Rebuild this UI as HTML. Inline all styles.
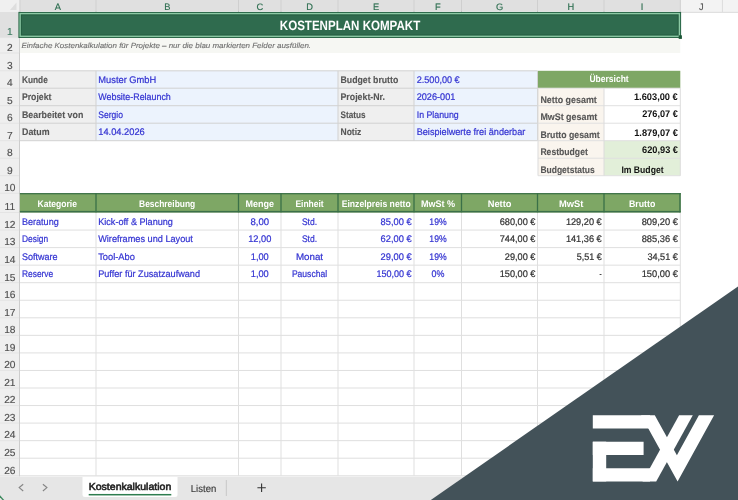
<!DOCTYPE html>
<html><head><meta charset="utf-8"><style>
html,body{margin:0;padding:0;background:#fff;width:738px;height:500px;overflow:hidden}
svg{display:block;font-family:"Liberation Sans",sans-serif;will-change:transform}
</style></head><body>
<svg width="738" height="500" viewBox="0 0 738 500" text-rendering="geometricPrecision">
<rect x="0.00" y="0.00" width="738.00" height="500.00" fill="#ffffff"/>
<rect x="0.00" y="0.00" width="738.00" height="12.00" fill="#f3f3f3"/>
<rect x="19.90" y="0.00" width="660.40" height="12.00" fill="#e0e0e0"/>
<rect x="0.00" y="11.00" width="738.00" height="1.00" fill="#f4f4f4"/>
<rect x="680.30" y="11.80" width="57.70" height="1.00" fill="#d9d9d9"/>
<rect x="19.40" y="0.00" width="1.00" height="12.00" fill="#cfcfcf"/>
<rect x="95.50" y="0.00" width="1.00" height="12.00" fill="#cfcfcf"/>
<rect x="238.00" y="0.00" width="1.00" height="12.00" fill="#cfcfcf"/>
<rect x="280.50" y="0.00" width="1.00" height="12.00" fill="#cfcfcf"/>
<rect x="337.50" y="0.00" width="1.00" height="12.00" fill="#cfcfcf"/>
<rect x="413.50" y="0.00" width="1.00" height="12.00" fill="#cfcfcf"/>
<rect x="461.00" y="0.00" width="1.00" height="12.00" fill="#cfcfcf"/>
<rect x="537.00" y="0.00" width="1.00" height="12.00" fill="#cfcfcf"/>
<rect x="603.50" y="0.00" width="1.00" height="12.00" fill="#cfcfcf"/>
<rect x="679.80" y="0.00" width="1.00" height="12.00" fill="#cfcfcf"/>
<rect x="721.90" y="0.00" width="1.00" height="12.00" fill="#dcdcdc"/>
<rect x="0.00" y="0.00" width="19.00" height="12.00" fill="#f0f0f0"/>
<polygon points="16.5,2.5 16.5,10.0 10.0,10.0" fill="#dedede"/>
<rect x="0.00" y="12.00" width="19.00" height="464.60" fill="#efefef"/>
<rect x="0.00" y="12.00" width="19.00" height="25.60" fill="#e0e0e0"/>
<rect x="19.00" y="12.00" width="0.90" height="464.60" fill="#c8c8c8"/>
<rect x="0.00" y="37.10" width="19.00" height="1.00" fill="#e4e4e4"/>
<rect x="0.00" y="52.50" width="19.00" height="1.00" fill="#e4e4e4"/>
<rect x="0.00" y="70.30" width="19.00" height="1.00" fill="#e4e4e4"/>
<rect x="0.00" y="87.70" width="19.00" height="1.00" fill="#e4e4e4"/>
<rect x="0.00" y="105.20" width="19.00" height="1.00" fill="#e4e4e4"/>
<rect x="0.00" y="122.70" width="19.00" height="1.00" fill="#e4e4e4"/>
<rect x="0.00" y="140.20" width="19.00" height="1.00" fill="#e4e4e4"/>
<rect x="0.00" y="157.70" width="19.00" height="1.00" fill="#e4e4e4"/>
<rect x="0.00" y="175.20" width="19.00" height="1.00" fill="#e4e4e4"/>
<rect x="0.00" y="192.70" width="19.00" height="1.00" fill="#e4e4e4"/>
<rect x="0.00" y="212.00" width="19.00" height="1.00" fill="#e4e4e4"/>
<rect x="0.00" y="229.55" width="19.00" height="1.00" fill="#e4e4e4"/>
<rect x="0.00" y="247.10" width="19.00" height="1.00" fill="#e4e4e4"/>
<rect x="0.00" y="264.65" width="19.00" height="1.00" fill="#e4e4e4"/>
<rect x="0.00" y="282.20" width="19.00" height="1.00" fill="#e4e4e4"/>
<rect x="0.00" y="299.75" width="19.00" height="1.00" fill="#e4e4e4"/>
<rect x="0.00" y="317.30" width="19.00" height="1.00" fill="#e4e4e4"/>
<rect x="0.00" y="334.85" width="19.00" height="1.00" fill="#e4e4e4"/>
<rect x="0.00" y="352.40" width="19.00" height="1.00" fill="#e4e4e4"/>
<rect x="0.00" y="369.95" width="19.00" height="1.00" fill="#e4e4e4"/>
<rect x="0.00" y="387.50" width="19.00" height="1.00" fill="#e4e4e4"/>
<rect x="0.00" y="405.05" width="19.00" height="1.00" fill="#e4e4e4"/>
<rect x="0.00" y="422.60" width="19.00" height="1.00" fill="#e4e4e4"/>
<rect x="0.00" y="440.15" width="19.00" height="1.00" fill="#e4e4e4"/>
<rect x="0.00" y="457.70" width="19.00" height="1.00" fill="#e4e4e4"/>
<rect x="0.00" y="475.25" width="19.00" height="1.00" fill="#e4e4e4"/>
<rect x="19.90" y="37.60" width="660.40" height="15.40" fill="#f6f7f3"/>
<rect x="19.90" y="212.00" width="660.40" height="1.00" fill="#dfdfdf"/>
<rect x="19.90" y="229.55" width="660.40" height="1.00" fill="#dfdfdf"/>
<rect x="19.90" y="247.10" width="660.40" height="1.00" fill="#dfdfdf"/>
<rect x="19.90" y="264.65" width="660.40" height="1.00" fill="#dfdfdf"/>
<rect x="19.90" y="282.20" width="660.40" height="1.00" fill="#dfdfdf"/>
<rect x="19.90" y="299.75" width="660.40" height="1.00" fill="#dfdfdf"/>
<rect x="19.90" y="317.30" width="660.40" height="1.00" fill="#dfdfdf"/>
<rect x="19.90" y="334.85" width="660.40" height="1.00" fill="#dfdfdf"/>
<rect x="19.90" y="352.40" width="660.40" height="1.00" fill="#dfdfdf"/>
<rect x="19.90" y="369.95" width="660.40" height="1.00" fill="#dfdfdf"/>
<rect x="19.90" y="387.50" width="660.40" height="1.00" fill="#dfdfdf"/>
<rect x="19.90" y="405.05" width="660.40" height="1.00" fill="#dfdfdf"/>
<rect x="19.90" y="422.60" width="660.40" height="1.00" fill="#dfdfdf"/>
<rect x="19.90" y="440.15" width="660.40" height="1.00" fill="#dfdfdf"/>
<rect x="19.90" y="457.70" width="660.40" height="1.00" fill="#dfdfdf"/>
<rect x="19.90" y="475.25" width="660.40" height="1.00" fill="#dfdfdf"/>
<rect x="95.50" y="212.50" width="1.00" height="263.25" fill="#dfdfdf"/>
<rect x="238.00" y="212.50" width="1.00" height="263.25" fill="#dfdfdf"/>
<rect x="280.50" y="212.50" width="1.00" height="263.25" fill="#dfdfdf"/>
<rect x="337.50" y="212.50" width="1.00" height="263.25" fill="#dfdfdf"/>
<rect x="413.50" y="212.50" width="1.00" height="263.25" fill="#dfdfdf"/>
<rect x="461.00" y="212.50" width="1.00" height="263.25" fill="#dfdfdf"/>
<rect x="537.00" y="212.50" width="1.00" height="263.25" fill="#dfdfdf"/>
<rect x="603.50" y="212.50" width="1.00" height="263.25" fill="#dfdfdf"/>
<rect x="679.80" y="212.50" width="1.00" height="263.25" fill="#dfdfdf"/>
<rect x="19.90" y="70.80" width="76.10" height="69.90" fill="#efefef"/>
<rect x="96.00" y="70.80" width="242.00" height="69.90" fill="#ecf3fd"/>
<rect x="338.00" y="70.80" width="76.00" height="69.90" fill="#efefef"/>
<rect x="414.00" y="70.80" width="123.50" height="69.90" fill="#ecf3fd"/>
<rect x="19.90" y="70.30" width="517.60" height="1.00" fill="#d2d2d2"/>
<rect x="19.90" y="87.70" width="517.60" height="1.00" fill="#d2d2d2"/>
<rect x="19.90" y="105.20" width="517.60" height="1.00" fill="#d2d2d2"/>
<rect x="19.90" y="122.70" width="517.60" height="1.00" fill="#d2d2d2"/>
<rect x="19.90" y="140.20" width="517.60" height="1.00" fill="#d2d2d2"/>
<rect x="95.50" y="70.80" width="1.00" height="69.90" fill="#d2d2d2"/>
<rect x="337.50" y="70.80" width="1.00" height="69.90" fill="#d2d2d2"/>
<rect x="413.50" y="70.80" width="1.00" height="69.90" fill="#d2d2d2"/>
<rect x="537.00" y="70.80" width="1.00" height="69.90" fill="#d2d2d2"/>
<rect x="538.00" y="70.80" width="142.30" height="17.40" fill="#7ea765"/>
<rect x="538.00" y="88.20" width="66.00" height="87.50" fill="#faf5ee"/>
<rect x="604.00" y="88.20" width="76.30" height="52.50" fill="#ffffff"/>
<rect x="604.00" y="140.70" width="76.30" height="35.00" fill="#e2efd9"/>
<rect x="538.00" y="87.70" width="142.30" height="1.00" fill="#e0e0e0"/>
<rect x="538.00" y="105.20" width="142.30" height="1.00" fill="#e0e0e0"/>
<rect x="538.00" y="122.70" width="142.30" height="1.00" fill="#e0e0e0"/>
<rect x="538.00" y="140.20" width="142.30" height="1.00" fill="#e0e0e0"/>
<rect x="538.00" y="157.70" width="142.30" height="1.00" fill="#e0e0e0"/>
<rect x="538.00" y="175.20" width="142.30" height="1.00" fill="#e0e0e0"/>
<rect x="537.50" y="88.20" width="1.00" height="87.50" fill="#dcdcdc"/>
<rect x="603.50" y="88.20" width="1.00" height="87.50" fill="#dcdcdc"/>
<rect x="679.80" y="88.20" width="1.00" height="87.50" fill="#dcdcdc"/>
<rect x="19.90" y="193.10" width="660.80" height="19.30" fill="#7ea765"/>
<rect x="19.90" y="193.10" width="660.80" height="1.20" fill="#3a7048"/>
<rect x="19.90" y="210.90" width="660.80" height="1.50" fill="#3a7048"/>
<rect x="679.30" y="193.10" width="1.40" height="19.30" fill="#3a7048"/>
<rect x="95.35" y="193.10" width="1.30" height="19.30" fill="#3a7048"/>
<rect x="237.85" y="193.10" width="1.30" height="19.30" fill="#3a7048"/>
<rect x="280.35" y="193.10" width="1.30" height="19.30" fill="#3a7048"/>
<rect x="337.35" y="193.10" width="1.30" height="19.30" fill="#3a7048"/>
<rect x="413.35" y="193.10" width="1.30" height="19.30" fill="#3a7048"/>
<rect x="460.85" y="193.10" width="1.30" height="19.30" fill="#3a7048"/>
<rect x="536.85" y="193.10" width="1.30" height="19.30" fill="#3a7048"/>
<rect x="603.35" y="193.10" width="1.30" height="19.30" fill="#3a7048"/>
<rect x="18.40" y="11.90" width="662.70" height="26.10" fill="#2b6748"/>
<rect x="19.45" y="12.95" width="660.60" height="24.00" fill="#8ccaa5"/>
<rect x="20.80" y="14.30" width="657.90" height="21.30" fill="#245e41"/>
<rect x="21.90" y="15.40" width="655.70" height="19.10" fill="#2f6b4e"/>
<rect x="678.70" y="35.30" width="3.20" height="3.60" fill="#1b5535"/>
<rect x="0.00" y="476.60" width="738.00" height="23.40" fill="#e6e6e6"/>
<path d="M23.2,484.3 L19.2,487.6 L23.2,491" fill="none" stroke="#858585" stroke-width="1.15"/>
<path d="M42.9,484.3 L46.9,487.6 L42.9,491" fill="none" stroke="#858585" stroke-width="1.15"/>
<path d="M82.5,477 H177.5 V494.5 Q177.5,497 175,497 H85 Q82.5,497 82.5,494.5 Z" fill="#ffffff"/>
<rect x="88.70" y="493.95" width="82.60" height="1.50" fill="#2e7d4f"/>
<rect x="225.80" y="480.00" width="1.00" height="16.00" fill="#c8c8c8"/>
<path d="M261.6,483.6 V492 M257.4,487.8 H265.8" stroke="#333" stroke-width="1.1"/>
<polygon points="0,495.3 0,497.3 2.4,500 4.2,500" fill="#3d8a5e"/>
<text x="57.95" y="9.75" font-size="9.3" fill="#2d6e50" stroke="#2d6e50" stroke-width="0.15" text-anchor="middle">A</text>
<text x="167.25" y="9.75" font-size="9.3" fill="#2d6e50" stroke="#2d6e50" stroke-width="0.15" text-anchor="middle">B</text>
<text x="259.75" y="9.75" font-size="9.3" fill="#2d6e50" stroke="#2d6e50" stroke-width="0.15" text-anchor="middle">C</text>
<text x="309.50" y="9.75" font-size="9.3" fill="#2d6e50" stroke="#2d6e50" stroke-width="0.15" text-anchor="middle">D</text>
<text x="376.00" y="9.75" font-size="9.3" fill="#2d6e50" stroke="#2d6e50" stroke-width="0.15" text-anchor="middle">E</text>
<text x="437.75" y="9.75" font-size="9.3" fill="#2d6e50" stroke="#2d6e50" stroke-width="0.15" text-anchor="middle">F</text>
<text x="499.50" y="9.75" font-size="9.3" fill="#2d6e50" stroke="#2d6e50" stroke-width="0.15" text-anchor="middle">G</text>
<text x="570.75" y="9.75" font-size="9.3" fill="#2d6e50" stroke="#2d6e50" stroke-width="0.15" text-anchor="middle">H</text>
<text x="642.15" y="9.75" font-size="9.3" fill="#2d6e50" stroke="#2d6e50" stroke-width="0.15" text-anchor="middle">I</text>
<text x="701.35" y="9.75" font-size="9.3" fill="#555555" stroke="#555555" stroke-width="0.15" text-anchor="middle">J</text>
<text x="9.80" y="35.40" font-size="10.2" fill="#3d7a60" stroke="#3d7a60" stroke-width="0.15" text-anchor="middle">1</text>
<text x="9.80" y="50.80" font-size="10.2" fill="#505050" stroke="#505050" stroke-width="0.15" text-anchor="middle">2</text>
<text x="9.80" y="68.60" font-size="10.2" fill="#505050" stroke="#505050" stroke-width="0.15" text-anchor="middle">3</text>
<text x="9.80" y="86.00" font-size="10.2" fill="#505050" stroke="#505050" stroke-width="0.15" text-anchor="middle">4</text>
<text x="9.80" y="103.50" font-size="10.2" fill="#505050" stroke="#505050" stroke-width="0.15" text-anchor="middle">5</text>
<text x="9.80" y="121.00" font-size="10.2" fill="#505050" stroke="#505050" stroke-width="0.15" text-anchor="middle">6</text>
<text x="9.80" y="138.50" font-size="10.2" fill="#505050" stroke="#505050" stroke-width="0.15" text-anchor="middle">7</text>
<text x="9.80" y="156.00" font-size="10.2" fill="#505050" stroke="#505050" stroke-width="0.15" text-anchor="middle">8</text>
<text x="9.80" y="173.50" font-size="10.2" fill="#505050" stroke="#505050" stroke-width="0.15" text-anchor="middle">9</text>
<text x="9.80" y="191.00" font-size="10.2" fill="#505050" stroke="#505050" stroke-width="0.15" text-anchor="middle">10</text>
<text x="9.80" y="210.30" font-size="10.2" fill="#505050" stroke="#505050" stroke-width="0.15" text-anchor="middle">11</text>
<text x="9.80" y="227.85" font-size="10.2" fill="#505050" stroke="#505050" stroke-width="0.15" text-anchor="middle">12</text>
<text x="9.80" y="245.40" font-size="10.2" fill="#505050" stroke="#505050" stroke-width="0.15" text-anchor="middle">13</text>
<text x="9.80" y="262.95" font-size="10.2" fill="#505050" stroke="#505050" stroke-width="0.15" text-anchor="middle">14</text>
<text x="9.80" y="280.50" font-size="10.2" fill="#505050" stroke="#505050" stroke-width="0.15" text-anchor="middle">15</text>
<text x="9.80" y="298.05" font-size="10.2" fill="#505050" stroke="#505050" stroke-width="0.15" text-anchor="middle">16</text>
<text x="9.80" y="315.60" font-size="10.2" fill="#505050" stroke="#505050" stroke-width="0.15" text-anchor="middle">17</text>
<text x="9.80" y="333.15" font-size="10.2" fill="#505050" stroke="#505050" stroke-width="0.15" text-anchor="middle">18</text>
<text x="9.80" y="350.70" font-size="10.2" fill="#505050" stroke="#505050" stroke-width="0.15" text-anchor="middle">19</text>
<text x="9.80" y="368.25" font-size="10.2" fill="#505050" stroke="#505050" stroke-width="0.15" text-anchor="middle">20</text>
<text x="9.80" y="385.80" font-size="10.2" fill="#505050" stroke="#505050" stroke-width="0.15" text-anchor="middle">21</text>
<text x="9.80" y="403.35" font-size="10.2" fill="#505050" stroke="#505050" stroke-width="0.15" text-anchor="middle">22</text>
<text x="9.80" y="420.90" font-size="10.2" fill="#505050" stroke="#505050" stroke-width="0.15" text-anchor="middle">23</text>
<text x="9.80" y="438.45" font-size="10.2" fill="#505050" stroke="#505050" stroke-width="0.15" text-anchor="middle">24</text>
<text x="9.80" y="456.00" font-size="10.2" fill="#505050" stroke="#505050" stroke-width="0.15" text-anchor="middle">25</text>
<text x="9.80" y="473.55" font-size="10.2" fill="#505050" stroke="#505050" stroke-width="0.15" text-anchor="middle">26</text>
<text x="279.80" y="30.00" font-size="13.5" fill="#ffffff" font-weight="bold" textLength="140.40" lengthAdjust="spacingAndGlyphs">KOSTENPLAN KOMPAKT</text>
<text x="21.40" y="48.00" font-size="7.4" fill="#707070" stroke="#707070" stroke-width="0.12" font-style="italic" textLength="289.70" lengthAdjust="spacingAndGlyphs">Einfache Kostenkalkulation für Projekte – nur die blau markierten Felder ausfüllen.</text>
<text x="21.90" y="82.70" font-size="9.6" fill="#565656" font-weight="bold" stroke="#565656" stroke-width="0.12" textLength="25.90" lengthAdjust="spacingAndGlyphs">Kunde</text>
<text x="21.90" y="100.20" font-size="9.6" fill="#565656" font-weight="bold" stroke="#565656" stroke-width="0.12" textLength="29.50" lengthAdjust="spacingAndGlyphs">Projekt</text>
<text x="22.00" y="117.70" font-size="9.6" fill="#565656" font-weight="bold" stroke="#565656" stroke-width="0.12" textLength="61.30" lengthAdjust="spacingAndGlyphs">Bearbeitet von</text>
<text x="22.00" y="135.20" font-size="9.6" fill="#565656" font-weight="bold" stroke="#565656" stroke-width="0.12" textLength="27.50" lengthAdjust="spacingAndGlyphs">Datum</text>
<text x="98.30" y="82.70" font-size="9.6" fill="#3434d2" stroke="#3434d2" stroke-width="0.22" textLength="58.00" lengthAdjust="spacingAndGlyphs">Muster GmbH</text>
<text x="98.30" y="100.20" font-size="9.6" fill="#3434d2" stroke="#3434d2" stroke-width="0.22" textLength="72.50" lengthAdjust="spacingAndGlyphs">Website-Relaunch</text>
<text x="98.30" y="117.70" font-size="9.6" fill="#3434d2" stroke="#3434d2" stroke-width="0.22" textLength="24.70" lengthAdjust="spacingAndGlyphs">Sergio</text>
<text x="98.30" y="135.20" font-size="9.6" fill="#3434d2" stroke="#3434d2" stroke-width="0.22" textLength="46.40" lengthAdjust="spacingAndGlyphs">14.04.2026</text>
<text x="340.50" y="82.70" font-size="9.6" fill="#565656" font-weight="bold" stroke="#565656" stroke-width="0.12" textLength="57.80" lengthAdjust="spacingAndGlyphs">Budget brutto</text>
<text x="340.50" y="100.20" font-size="9.6" fill="#565656" font-weight="bold" stroke="#565656" stroke-width="0.12" textLength="44.50" lengthAdjust="spacingAndGlyphs">Projekt-Nr.</text>
<text x="340.50" y="117.70" font-size="9.6" fill="#565656" font-weight="bold" stroke="#565656" stroke-width="0.12" textLength="25.00" lengthAdjust="spacingAndGlyphs">Status</text>
<text x="340.50" y="135.20" font-size="9.6" fill="#565656" font-weight="bold" stroke="#565656" stroke-width="0.12" textLength="20.80" lengthAdjust="spacingAndGlyphs">Notiz</text>
<text x="416.70" y="82.70" font-size="9.6" fill="#3434d2" stroke="#3434d2" stroke-width="0.22" textLength="43.00" lengthAdjust="spacingAndGlyphs">2.500,00 €</text>
<text x="416.70" y="100.20" font-size="9.6" fill="#3434d2" stroke="#3434d2" stroke-width="0.22" textLength="38.60" lengthAdjust="spacingAndGlyphs">2026-001</text>
<text x="416.70" y="117.70" font-size="9.6" fill="#3434d2" stroke="#3434d2" stroke-width="0.22" textLength="42.00" lengthAdjust="spacingAndGlyphs">In Planung</text>
<text x="416.70" y="135.20" font-size="9.6" fill="#3434d2" stroke="#3434d2" stroke-width="0.22" textLength="108.60" lengthAdjust="spacingAndGlyphs">Beispielwerte frei änderbar</text>
<text x="589.40" y="82.40" font-size="9.6" fill="#ffffff" font-weight="bold" textLength="39.30" lengthAdjust="spacingAndGlyphs">Übersicht</text>
<text x="540.40" y="102.70" font-size="9.6" fill="#565656" font-weight="bold" stroke="#565656" stroke-width="0.12" textLength="56.40" lengthAdjust="spacingAndGlyphs">Netto gesamt</text>
<text x="540.40" y="120.20" font-size="9.6" fill="#565656" font-weight="bold" stroke="#565656" stroke-width="0.12" textLength="56.90" lengthAdjust="spacingAndGlyphs">MwSt gesamt</text>
<text x="540.40" y="138.00" font-size="9.6" fill="#565656" font-weight="bold" stroke="#565656" stroke-width="0.12" textLength="59.20" lengthAdjust="spacingAndGlyphs">Brutto gesamt</text>
<text x="540.40" y="155.40" font-size="9.6" fill="#565656" font-weight="bold" stroke="#565656" stroke-width="0.12" textLength="47.40" lengthAdjust="spacingAndGlyphs">Restbudget</text>
<text x="540.40" y="172.80" font-size="9.6" fill="#565656" font-weight="bold" stroke="#565656" stroke-width="0.12" textLength="54.30" lengthAdjust="spacingAndGlyphs">Budgetstatus</text>
<text x="633.90" y="99.70" font-size="9.6" fill="#111111" font-weight="bold" textLength="43.90" lengthAdjust="spacingAndGlyphs">1.603,00 €</text>
<text x="642.20" y="117.40" font-size="9.6" fill="#111111" font-weight="bold" textLength="35.60" lengthAdjust="spacingAndGlyphs">276,07 €</text>
<text x="634.20" y="135.60" font-size="9.6" fill="#111111" font-weight="bold" textLength="43.80" lengthAdjust="spacingAndGlyphs">1.879,07 €</text>
<text x="642.00" y="152.70" font-size="9.6" fill="#111111" font-weight="bold" textLength="36.00" lengthAdjust="spacingAndGlyphs">620,93 €</text>
<text x="621.40" y="172.80" font-size="9.6" fill="#111111" font-weight="bold" textLength="42.20" lengthAdjust="spacingAndGlyphs">Im Budget</text>
<text x="37.50" y="206.70" font-size="9.6" fill="#ffffff" font-weight="bold" textLength="39.50" lengthAdjust="spacingAndGlyphs">Kategorie</text>
<text x="139.10" y="206.70" font-size="9.6" fill="#ffffff" font-weight="bold" textLength="56.10" lengthAdjust="spacingAndGlyphs">Beschreibung</text>
<text x="245.40" y="206.70" font-size="9.6" fill="#ffffff" font-weight="bold" textLength="28.50" lengthAdjust="spacingAndGlyphs">Menge</text>
<text x="295.40" y="206.70" font-size="9.6" fill="#ffffff" font-weight="bold" textLength="28.30" lengthAdjust="spacingAndGlyphs">Einheit</text>
<text x="341.70" y="206.70" font-size="9.6" fill="#ffffff" font-weight="bold" textLength="69.00" lengthAdjust="spacingAndGlyphs">Einzelpreis netto</text>
<text x="420.90" y="206.70" font-size="9.6" fill="#ffffff" font-weight="bold" textLength="34.30" lengthAdjust="spacingAndGlyphs">MwSt %</text>
<text x="487.70" y="206.70" font-size="9.6" fill="#ffffff" font-weight="bold" textLength="23.80" lengthAdjust="spacingAndGlyphs">Netto</text>
<text x="559.00" y="206.70" font-size="9.6" fill="#ffffff" font-weight="bold" textLength="24.40" lengthAdjust="spacingAndGlyphs">MwSt</text>
<text x="628.90" y="206.70" font-size="9.6" fill="#ffffff" font-weight="bold" textLength="26.40" lengthAdjust="spacingAndGlyphs">Brutto</text>
<text x="22.00" y="224.60" font-size="9.6" fill="#3434d2" stroke="#3434d2" stroke-width="0.22" textLength="36.70" lengthAdjust="spacingAndGlyphs">Beratung</text>
<text x="98.20" y="224.60" font-size="9.6" fill="#3434d2" stroke="#3434d2" stroke-width="0.22" textLength="74.70" lengthAdjust="spacingAndGlyphs">Kick-off &amp; Planung</text>
<text x="250.45" y="224.60" font-size="9.6" fill="#3434d2" stroke="#3434d2" stroke-width="0.22" textLength="18.60" lengthAdjust="spacingAndGlyphs">8,00</text>
<text x="301.90" y="224.60" font-size="9.6" fill="#3434d2" stroke="#3434d2" stroke-width="0.22" textLength="15.20" lengthAdjust="spacingAndGlyphs">Std.</text>
<text x="380.60" y="224.60" font-size="9.6" fill="#3434d2" stroke="#3434d2" stroke-width="0.22" textLength="31.00" lengthAdjust="spacingAndGlyphs">85,00 €</text>
<text x="429.35" y="224.60" font-size="9.6" fill="#3434d2" stroke="#3434d2" stroke-width="0.22" textLength="17.30" lengthAdjust="spacingAndGlyphs">19%</text>
<text x="499.70" y="224.60" font-size="9.6" fill="#333333" stroke="#333333" stroke-width="0.22" textLength="35.70" lengthAdjust="spacingAndGlyphs">680,00 €</text>
<text x="565.90" y="224.60" font-size="9.6" fill="#333333" stroke="#333333" stroke-width="0.22" textLength="35.80" lengthAdjust="spacingAndGlyphs">129,20 €</text>
<text x="641.70" y="224.60" font-size="9.6" fill="#333333" stroke="#333333" stroke-width="0.22" textLength="36.20" lengthAdjust="spacingAndGlyphs">809,20 €</text>
<text x="22.00" y="242.10" font-size="9.6" fill="#3434d2" stroke="#3434d2" stroke-width="0.22" textLength="26.10" lengthAdjust="spacingAndGlyphs">Design</text>
<text x="98.20" y="242.10" font-size="9.6" fill="#3434d2" stroke="#3434d2" stroke-width="0.22" textLength="94.70" lengthAdjust="spacingAndGlyphs">Wireframes und Layout</text>
<text x="248.15" y="242.10" font-size="9.6" fill="#3434d2" stroke="#3434d2" stroke-width="0.22" textLength="23.20" lengthAdjust="spacingAndGlyphs">12,00</text>
<text x="301.90" y="242.10" font-size="9.6" fill="#3434d2" stroke="#3434d2" stroke-width="0.22" textLength="15.20" lengthAdjust="spacingAndGlyphs">Std.</text>
<text x="380.60" y="242.10" font-size="9.6" fill="#3434d2" stroke="#3434d2" stroke-width="0.22" textLength="31.00" lengthAdjust="spacingAndGlyphs">62,00 €</text>
<text x="429.35" y="242.10" font-size="9.6" fill="#3434d2" stroke="#3434d2" stroke-width="0.22" textLength="17.30" lengthAdjust="spacingAndGlyphs">19%</text>
<text x="499.70" y="242.10" font-size="9.6" fill="#333333" stroke="#333333" stroke-width="0.22" textLength="35.70" lengthAdjust="spacingAndGlyphs">744,00 €</text>
<text x="565.90" y="242.10" font-size="9.6" fill="#333333" stroke="#333333" stroke-width="0.22" textLength="35.80" lengthAdjust="spacingAndGlyphs">141,36 €</text>
<text x="641.70" y="242.10" font-size="9.6" fill="#333333" stroke="#333333" stroke-width="0.22" textLength="36.20" lengthAdjust="spacingAndGlyphs">885,36 €</text>
<text x="22.00" y="259.60" font-size="9.6" fill="#3434d2" stroke="#3434d2" stroke-width="0.22" textLength="35.60" lengthAdjust="spacingAndGlyphs">Software</text>
<text x="98.20" y="259.60" font-size="9.6" fill="#3434d2" stroke="#3434d2" stroke-width="0.22" textLength="36.70" lengthAdjust="spacingAndGlyphs">Tool-Abo</text>
<text x="250.75" y="259.60" font-size="9.6" fill="#3434d2" stroke="#3434d2" stroke-width="0.22" textLength="18.00" lengthAdjust="spacingAndGlyphs">1,00</text>
<text x="295.90" y="259.60" font-size="9.6" fill="#3434d2" stroke="#3434d2" stroke-width="0.22" textLength="27.20" lengthAdjust="spacingAndGlyphs">Monat</text>
<text x="380.60" y="259.60" font-size="9.6" fill="#3434d2" stroke="#3434d2" stroke-width="0.22" textLength="31.00" lengthAdjust="spacingAndGlyphs">29,00 €</text>
<text x="429.35" y="259.60" font-size="9.6" fill="#3434d2" stroke="#3434d2" stroke-width="0.22" textLength="17.30" lengthAdjust="spacingAndGlyphs">19%</text>
<text x="504.80" y="259.60" font-size="9.6" fill="#333333" stroke="#333333" stroke-width="0.22" textLength="30.60" lengthAdjust="spacingAndGlyphs">29,00 €</text>
<text x="576.70" y="259.60" font-size="9.6" fill="#333333" stroke="#333333" stroke-width="0.22" textLength="25.00" lengthAdjust="spacingAndGlyphs">5,51 €</text>
<text x="647.40" y="259.60" font-size="9.6" fill="#333333" stroke="#333333" stroke-width="0.22" textLength="30.50" lengthAdjust="spacingAndGlyphs">34,51 €</text>
<text x="22.00" y="277.10" font-size="9.6" fill="#3434d2" stroke="#3434d2" stroke-width="0.22" textLength="31.20" lengthAdjust="spacingAndGlyphs">Reserve</text>
<text x="98.20" y="277.10" font-size="9.6" fill="#3434d2" stroke="#3434d2" stroke-width="0.22" textLength="101.80" lengthAdjust="spacingAndGlyphs">Puffer für Zusatzaufwand</text>
<text x="250.75" y="277.10" font-size="9.6" fill="#3434d2" stroke="#3434d2" stroke-width="0.22" textLength="18.00" lengthAdjust="spacingAndGlyphs">1,00</text>
<text x="291.90" y="277.10" font-size="9.6" fill="#3434d2" stroke="#3434d2" stroke-width="0.22" textLength="35.20" lengthAdjust="spacingAndGlyphs">Pauschal</text>
<text x="376.40" y="277.10" font-size="9.6" fill="#3434d2" stroke="#3434d2" stroke-width="0.22" textLength="35.20" lengthAdjust="spacingAndGlyphs">150,00 €</text>
<text x="431.55" y="277.10" font-size="9.6" fill="#3434d2" stroke="#3434d2" stroke-width="0.22" textLength="12.90" lengthAdjust="spacingAndGlyphs">0%</text>
<text x="499.70" y="277.10" font-size="9.6" fill="#333333" stroke="#333333" stroke-width="0.22" textLength="35.70" lengthAdjust="spacingAndGlyphs">150,00 €</text>
<text x="599.60" y="277.10" font-size="9.6" fill="#333333" stroke="#333333" stroke-width="0.22" textLength="2.10" lengthAdjust="spacingAndGlyphs">-</text>
<text x="641.70" y="277.10" font-size="9.6" fill="#333333" stroke="#333333" stroke-width="0.22" textLength="36.20" lengthAdjust="spacingAndGlyphs">150,00 €</text>
<text x="88.70" y="490.00" font-size="10.0" fill="#222222" stroke="#222222" stroke-width="0.55" textLength="82.60" lengthAdjust="spacingAndGlyphs">Kostenkalkulation</text>
<text x="190.80" y="492.00" font-size="10.0" fill="#3a3a3a" stroke="#3a3a3a" stroke-width="0.15" textLength="25.50" lengthAdjust="spacingAndGlyphs">Listen</text>
<polygon points="430.8,500 738,286.5 738,500" fill="#435259"/>
<polygon points="592.8,415.3 650,415.3 650,428.5 592.8,428.5" fill="#ffffff"/>
<polygon points="592.8,441.7 643.6,441.7 643.6,455.0 592.8,455.0" fill="#ffffff"/>
<polygon points="592.8,441.7 606.2,441.7 606.2,481.4 592.8,481.4" fill="#ffffff"/>
<polygon points="592.8,468.2 650,468.2 650,481.4 592.8,481.4" fill="#ffffff"/>
<polygon points="641.0,415.3 654.8,415.3 676.9,455.2 698.9,415.3 714.1,415.3 677.6,481.4" fill="#ffffff"/>
<polygon points="679.1,415.3 692.8,415.3 656.2,481.4 642.5,481.4" fill="#ffffff"/>
</svg>
</body></html>
